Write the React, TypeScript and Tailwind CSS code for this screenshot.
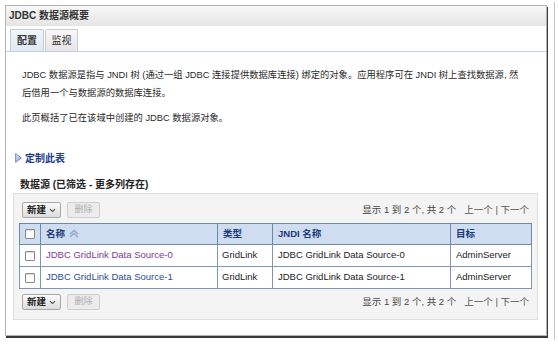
import React from "react";

function SortIcon() {
  return (
    <svg width="12" height="9" viewBox="0 0 12 9" className="inline-block ml-[3px] -mt-[1px]">
      <path d="M2 5 L6 1.5 L10 5" fill="none" stroke="#8fa9cf" strokeWidth="1.4" />
      <path d="M2 8 L6 4.5 L10 8" fill="none" stroke="#8fa9cf" strokeWidth="1.4" />
    </svg>
  );
}

function Chevron() {
  return (
    <svg width="7" height="5" viewBox="0 0 7 5" className="inline-block ml-[3px]">
      <path d="M1 1.2 L3.5 3.6 L6 1.2" fill="none" stroke="#444" strokeWidth="1.1" />
    </svg>
  );
}

function Toolbar() {
  return (
    <div className="flex items-center h-[16px] pl-[3px] pr-[3px]">
      <div className="h-[16px] px-[4px] flex items-center border border-[#a9a9a9] rounded-[2px] bg-gradient-to-b from-[#fbfbfb] to-[#dcdcdc] text-[#222] text-[9.5px] font-bold">
        新建<Chevron />
      </div>
      <div className="ml-[6px] h-[16px] w-[33px] flex items-center justify-center border border-[#cfcfcf] rounded-[2px] bg-[#ececec] text-[#b0b0b0] text-[9px]">
        删除
      </div>
      <div className="ml-auto text-[9.5px] text-[#444] flex items-center">
        <span>显示 1 到 2 个, 共 2 个</span>
        <span className="ml-[8px] text-[#555]">上一个 | 下一个</span>
      </div>
    </div>
  );
}

function CheckBox() {
  return <div className="w-[10px] h-[10px] border border-[#8a8a8a] bg-white rounded-[1px] mx-auto shadow-[inset_0_1px_1px_#ddd]" />;
}

export default function App() {
  const rows = [
    { name: "JDBC GridLink Data Source-0", color: "text-[#7d3a98]" },
    { name: "JDBC GridLink Data Source-1", color: "text-[#2c4c9c]" },
  ];
  return (
    <div className="w-[558px] h-[345px] bg-white flex font-['Liberation_Sans','Noto_Sans_CJK_SC',sans-serif] text-[#333]">
      <div className="ml-[5px] mt-[5px] w-[542px] h-[331px] border border-[#b4b4b4] shadow-[1px_2px_0_#3a3a3a] flex flex-col">
        <div className="h-[20px] flex items-center pl-[3px] border-b border-[#e2e2e2] bg-gradient-to-b from-[#f7f7f7] to-[#e6e6e6] text-[10px] font-bold text-[#333]">
          JDBC 数据源概要
        </div>
        <div className="flex items-end pt-[3px] pl-[4px] border-b border-[#c6d0dc] gap-[1px]">
          <div className="h-[22px] w-[34px] flex items-center justify-center border border-b-0 border-[#c2cad6] rounded-t-[2px] bg-gradient-to-b from-[#f2f6fb] to-[#dfe8f3] text-[10px] font-bold text-[#333]">
            配置
          </div>
          <div className="h-[22px] w-[33px] flex items-center justify-center border border-b-0 border-[#cccccc] rounded-t-[2px] bg-gradient-to-b from-[#f8f8f8] to-[#e6e6e6] text-[10px] text-[#333]">
            监视
          </div>
        </div>
        <div className="pl-[16px] pr-[10px] pt-[14px] text-[9.3px] leading-[18px] text-[#2a2a2a]">
          <p>
            JDBC 数据源是指与 JNDI 树 (通过一组 JDBC 连接提供数据库连接) 绑定的对象。应用程序可在 JNDI 树上查找数据源, 然
            <br />
            后借用一个与数据源的数据库连接。
          </p>
          <p className="mt-[7px]">此页概括了已在该域中创建的 JDBC 数据源对象。</p>
        </div>
        <div className="flex items-center pl-[9px] mt-[22px] h-[18px]">
          <svg width="7" height="10" viewBox="0 0 7 10">
            <defs>
              <linearGradient id="tg" x1="0" y1="0" x2="1" y2="1">
                <stop offset="0" stopColor="#e6eefa" />
                <stop offset="1" stopColor="#7f9ccc" />
              </linearGradient>
            </defs>
            <path d="M0.6 0.6 L6.4 5 L0.6 9.4 Z" fill="url(#tg)" stroke="#5a7bb5" strokeWidth="0.8" />
          </svg>
          <span className="ml-[3px] text-[10px] font-bold text-[#1d3b8a]">定制此表</span>
        </div>
        <div className="pl-[14px] mt-[9px] h-[16px] flex items-center text-[10px] font-bold text-[#222]">
          数据源 (已筛选 - 更多列存在)
        </div>
        <div className="ml-[7px] mt-[1px] w-[525px] border border-[#dedede] bg-[#f4f4f4] pt-[8px] pb-[9px] pl-[5px] pr-[5px]">
          <Toolbar />
          <table className="mt-[5px] w-[512px] border-collapse table-fixed text-[9.5px]">
            <colgroup>
              <col className="w-[21px]" />
              <col className="w-[177px]" />
              <col className="w-[55px]" />
              <col className="w-[178px]" />
              <col className="w-[81px]" />
            </colgroup>
            <thead>
              <tr className="h-[21px] bg-[#cfddf0] text-[#1c3a78] font-bold">
                <th className="border border-[#6e88a8]"><CheckBox /></th>
                <th className="border border-[#6e88a8] text-left pl-[5px]">名称<SortIcon /></th>
                <th className="border border-[#6e88a8] text-left pl-[5px]">类型</th>
                <th className="border border-[#6e88a8] text-left pl-[5px]">JNDI 名称</th>
                <th className="border border-[#6e88a8] text-left pl-[5px]">目标</th>
              </tr>
            </thead>
            <tbody>
              {rows.map((r) => (
                <tr key={r.name} className="h-[22px] bg-white text-[#222]">
                  <td className="border border-[#7f95b0]"><CheckBox /></td>
                  <td className={"border border-[#7f95b0] pl-[5px] " + r.color}>{r.name}</td>
                  <td className="border border-[#7f95b0] pl-[4px]">GridLink</td>
                  <td className="border border-[#7f95b0] pl-[5px]">{r.name}</td>
                  <td className="border border-[#7f95b0] pl-[5px]">AdminServer</td>
                </tr>
              ))}
            </tbody>
          </table>
          <div className="mt-[5px]">
            <Toolbar />
          </div>
        </div>
      </div>
      <div className="ml-[7px] mt-[2px] w-[1px] h-[338px] bg-[#c8c8c8]" />
    </div>
  );
}
